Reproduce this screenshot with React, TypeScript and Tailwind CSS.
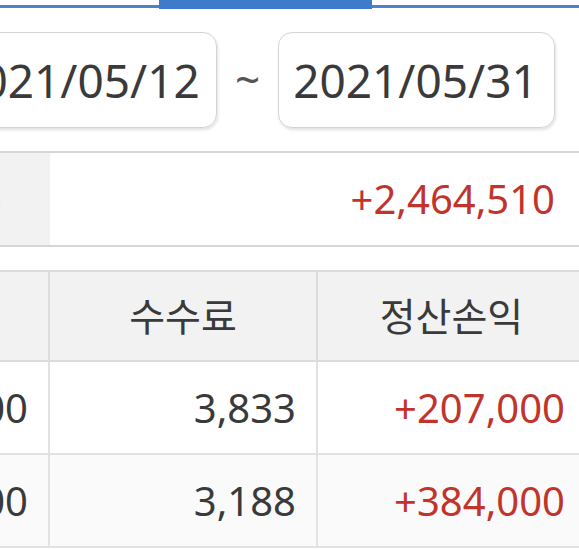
const rows = [
  { amount: "12,420,000", fee: "3,833", pnl: "+207,000", bg: "bg-white" },
  { amount: "10,340,000", fee: "3,188", pnl: "+384,000", bg: "bg-[#fafafa]" },
];

export default function App() {
  return (
    <div
      className="w-[579px] h-[549px] overflow-hidden bg-white text-[#3a3a3a]"
      style={{ fontFamily: '"Noto Sans", "Noto Sans CJK KR", sans-serif' }}
    >
      {/* TAB BAR */}
      <div className="flex items-start h-[9px]">
        <div className="w-[159px] mt-[5px] h-[3px] bg-[#4a83cc]" />
        <div className="w-[213px] h-[9px] bg-[#3f7bc8]" />
        <div className="flex-1 mt-[5px] h-[3px] bg-[#4a83cc]" />
      </div>

      {/* DATE RANGE */}
      <div className="flex items-center mt-[23px] -ml-[60px]">
        <div className="w-[277px] h-[96px] shrink-0 flex items-center justify-center rounded-[14px] border border-[#d4d4d4] shadow-[1px_2px_3px_rgba(0,0,0,0.12)] text-[46px] pr-[2px]">
          2021/05/12
        </div>
        <div className="w-[61px] shrink-0 text-center text-[44px] text-[#555] leading-none -mt-[2px]">~</div>
        <div className="w-[277px] h-[96px] shrink-0 flex items-center justify-center rounded-[14px] border border-[#d4d4d4] shadow-[1px_2px_3px_rgba(0,0,0,0.12)] text-[46px] pr-[2px]">
          2021/05/31
        </div>
      </div>

      {/* SUMMARY */}
      <div className="flex mt-[23px] h-[96px] border-y-2 border-[#d6d6d6] -ml-[250px] w-[829px]">
        <div className="w-[300px] shrink-0 bg-[#f2f2f2] flex items-center justify-end pr-[49px] text-[36px]">
          합계(원)
        </div>
        <div className="flex-1 flex items-center justify-end pr-[24px] text-[40px] text-[#c1342c]">
          +2,464,510
        </div>
      </div>

      {/* TABLE */}
      <div className="mt-[23px] -ml-[250px] w-[835px] border-t-2 border-[#dcdcdc]">
        <div className="flex h-[90px] bg-[#f2f2f2] border-b-2 border-[#dcdcdc] text-[39px]">
          <div className="w-[300px] shrink-0 flex items-center justify-center border-r-2 border-[#dcdcdc]">
            매매금액
          </div>
          <div className="w-[268px] shrink-0 flex items-center justify-center border-r-2 border-[#dcdcdc]">
            수수료
          </div>
          <div className="flex-1 flex items-center justify-center">정산손익</div>
        </div>
        {rows.map((r) => (
          <div key={r.fee} className={`flex h-[93px] border-b-2 border-[#e2e2e2] text-[40px] ${r.bg}`}>
            <div className="w-[300px] shrink-0 flex items-center justify-end pr-[20px] border-r-2 border-[#e2e2e2]">
              {r.amount}
            </div>
            <div className="w-[268px] shrink-0 flex items-center justify-end pr-[20px] border-r-2 border-[#e2e2e2]">
              {r.fee}
            </div>
            <div className="flex-1 flex items-center justify-end pr-[20px] text-[#c1342c]">{r.pnl}</div>
          </div>
        ))}
      </div>
    </div>
  );
}
